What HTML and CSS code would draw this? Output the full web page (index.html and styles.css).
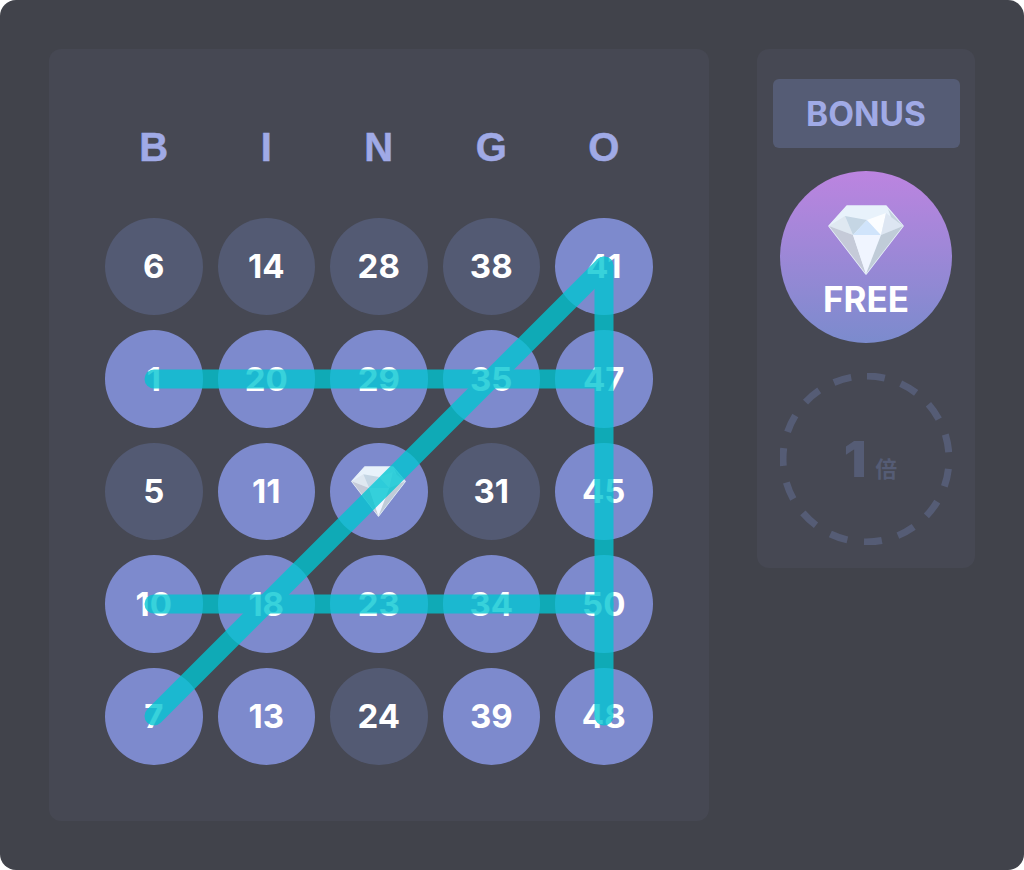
FILE: index.html
```html
<!DOCTYPE html>
<html>
	<head>
		<meta charset="UTF-8">
		<title>BINGO</title>
		<link rel="stylesheet" href="styles.css">
	</head>
	<body>
		<svg class="defs" width="0" height="0">
			<symbol id="gem" viewBox="-1 -1 76 70">
				<polygon points="18,0 57,0 74,20 37,68 0,20" fill="#e8f2fb" stroke="#e8f2fb" stroke-width="1.5" stroke-linejoin="round"/>
				<polygon points="0,20 16,10 24,29" fill="#dfe8f1"/>
				<polygon points="16,10 38,14 24,29" fill="#c5d6e4"/>
				<polygon points="24,29 38,14 52,29" fill="#d0e4fb"/>
				<polygon points="38,14 57,7 52,29" fill="#fbfdff"/>
				<polygon points="57,7 74,20 52,29" fill="#dde6f2"/>
				<polygon points="59,3 74,20 62,11" fill="#c5d2de"/>
				<polygon points="0,20 24,29 37,68" fill="#c5cad8"/>
				<polygon points="24,29 52,29 37,68" fill="#f0f5ff"/>
				<polygon points="52,29 74,20 37,68" fill="#c0ccd8"/>
			</symbol>
		</svg>
		<div class="frame">
			<div class="board">
				<div class="letters">
					<span>B</span><span>I</span><span>N</span><span>G</span><span>O</span>
				</div>
				<div class="cells">
					<div class="cell">6</div>
					<div class="cell">14</div>
					<div class="cell">28</div>
					<div class="cell">38</div>
					<div class="cell on">41</div>

					<div class="cell on">1</div>
					<div class="cell on">20</div>
					<div class="cell on">29</div>
					<div class="cell on">35</div>
					<div class="cell on">47</div>

					<div class="cell">5</div>
					<div class="cell on">11</div>
					<div class="cell on"><svg class="cell-gem"><use href="#gem"/></svg></div>
					<div class="cell">31</div>
					<div class="cell on">45</div>

					<div class="cell on">10</div>
					<div class="cell on">18</div>
					<div class="cell on">23</div>
					<div class="cell on">34</div>
					<div class="cell on">50</div>

					<div class="cell on">7</div>
					<div class="cell on">13</div>
					<div class="cell">24</div>
					<div class="cell on">39</div>
					<div class="cell on">48</div>
				</div>
				<!-- winning lines -->
				<svg class="lines" width="660" height="772" viewBox="0 0 660 772">
					<g>
						<line x1="105" y1="330" x2="555" y2="330"/>
						<line x1="105" y1="555" x2="555" y2="555"/>
						<line x1="105" y1="667" x2="555" y2="217"/>
						<line x1="555" y1="217" x2="555" y2="667"/>
					</g>
				</svg>
			</div>
			<div class="side">
				<div class="bonus">BONUS</div>
				<div class="free">
					<svg class="free-gem"><use href="#gem"/></svg>
					<span>FREE</span>
				</div>
				<div class="multi">
					<svg class="ring" width="172" height="172" viewBox="0 0 172 172">
						<circle cx="86" cy="86" r="83"/>
					</svg>
					<b>1</b><i>倍</i>
				</div>
			</div>
		</div>
	</body>
</html>
```

FILE: styles.css
```css
*{
	margin: 0;
	padding: 0;
	box-sizing: border-box;
}

body{
	background: #fff;
	font-family: Inter, "Noto Sans CJK SC", sans-serif;
	font-weight: 700;
}

.defs{
	display: block;
}

.frame{
	display: flex;
	align-items: flex-start;
	gap: 48px;
	width: 1024px;
	height: 870px;
	padding: 49px;
	background: #41434b;
	border-radius: 16px;
}

.board{
	position: relative;
	flex: none;
	width: 660px;
	height: 772px;
	padding: 80px 56px 0;
	background: #464853;
	border-radius: 12px;
}

.letters,
.cells{
	display: grid;
	grid-template-columns: repeat(5, 97.5px);
	column-gap: 15px;
}

.letters{
	height: 36px;
	margin-bottom: 52.5px;
	line-height: 36px;
	font-family: "Liberation Sans", Arial, sans-serif;
	font-size: 40px;
	-webkit-text-stroke: .5px #a0aae6;
	text-align: center;
	color: #a0aae6;
}

.cells{
	row-gap: 15px;
}

.cell{
	display: flex;
	align-items: center;
	justify-content: center;
	height: 97.5px;
	border-radius: 50%;
	background: #535a73;
	color: #fff;
	font-size: 33px;
}

.cell.on{
	background: #7d8acd;
}

.cell-gem{
	width: 55px;
	height: 51px;
}

.lines{
	position: absolute;
	left: 0;
	top: 0;
}

.lines g{
	opacity: .78;
}

.lines line{
	stroke: #00c6d2;
	stroke-width: 19;
	stroke-linecap: round;
}

.side{
	flex: none;
	display: flex;
	flex-direction: column;
	align-items: center;
	width: 218px;
	height: 519px;
	padding-top: 30px;
	background: #464853;
	border-radius: 12px;
}

.bonus{
	width: 187px;
	height: 69px;
	line-height: 71px;
	text-align: center;
	font-size: 33.5px;
	color: #a0aae6;
	background: #555c75;
	border-radius: 6px;
}

.free{
	display: flex;
	flex-direction: column;
	align-items: center;
	width: 172px;
	height: 172px;
	margin-top: 23px;
	padding-top: 33px;
	border-radius: 50%;
	background: linear-gradient(#bc84e0, #7b8bcd);
	color: #fff;
	font-size: 35px;
}

.free-gem{
	width: 76px;
	height: 72px;
}

.free span{
	line-height: 40px;
	margin-top: 3px;
}

.multi{
	position: relative;
	display: flex;
	align-items: baseline;
	justify-content: center;
	gap: 9px;
	width: 172px;
	height: 172px;
	margin-top: 30px;
	padding-left: 9px;
	line-height: 172px;
	color: #555c75;
}

.multi b{
	font-size: 50px;
}

.multi i{
	font-style: normal;
	font-size: 22px;
}

.ring{
	position: absolute;
	left: 0;
	top: 0;
	transform: rotate(-90deg);
}

.ring circle{
	fill: none;
	stroke: #555c75;
	stroke-width: 7;
	stroke-dasharray: 18 16.77;
	stroke-dashoffset: -1;
}
```
